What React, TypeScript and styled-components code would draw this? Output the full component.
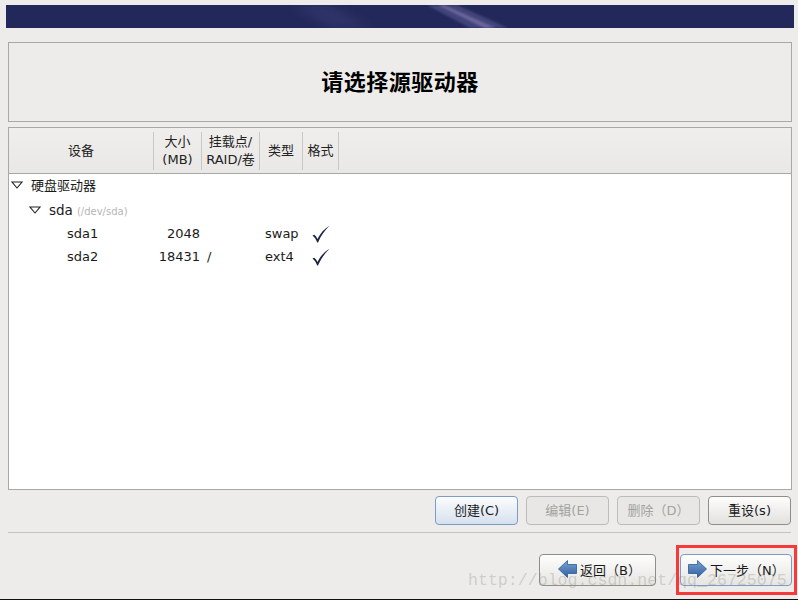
import React from 'react'
import styled, { createGlobalStyle } from 'styled-components'

const GlobalStyle = createGlobalStyle`
    html, body {
        margin: 0;
        padding: 0;
        background: #edecea;
    }
`

const Page = styled.div`
    position: relative;
    width: 798px;
    height: 600px;
    box-sizing: border-box;
    padding-top: 5px;
    display: flex;
    flex-direction: column;
    overflow: hidden;
    background: #edecea;
    color: #1a1a1a;
    font-family: "DejaVu Sans", "Noto Sans CJK SC", sans-serif;
    font-size: 13px;
    border-bottom: 1px solid #111;
`

const Banner = styled.div`
    height: 23px;
    margin: 0 4px 0 6px;
    flex-shrink: 0;
    background: #22295a;
    line-height: 0;
`

const TitleBox = styled.div`
    height: 80px;
    box-sizing: border-box;
    margin: 14px 6px 0 8px;
    padding-bottom: 4px;
    flex-shrink: 0;
    display: flex;
    align-items: center;
    justify-content: center;
    border: 1px solid #a8a8a4;
    font-family: "Noto Sans CJK SC", sans-serif;
    font-size: 22px;
    font-weight: 700;
    color: #000;
    letter-spacing: 0.5px;
`

const TableBox = styled.div`
    height: 363px;
    box-sizing: border-box;
    margin: 5px 6px 0 8px;
    flex-shrink: 0;
    border: 1px solid #a8a8a4;
    background: #fff;
    display: flex;
    flex-direction: column;
`

const HeaderRow = styled.div`
    height: 46px;
    flex-shrink: 0;
    box-sizing: border-box;
    display: grid;
    grid-template-columns: 145px 48px 58px 43px 36px;
    align-items: center;
    background: linear-gradient(#efeeec, #e9e8e6);
    border-bottom: 1px solid #a8a8a4;
`

const HeaderCell = styled.div`
    height: 38px;
    display: flex;
    align-items: center;
    justify-content: center;
    text-align: center;
    line-height: 18px;
    white-space: pre;
    border-right: 1px solid #c9c8c5;
    color: #222;
`

const TreeBody = styled.div`
    display: flex;
    flex-direction: column;
`

const TreeRow = styled.div<{ $indent: number }>`
    height: 24px;
    box-sizing: border-box;
    display: flex;
    align-items: center;
    gap: 8px;
    padding-left: ${p => p.$indent}px;
`

const RootRow = styled(TreeRow)`
    padding-bottom: 3px;
`

const Expander = styled.svg`
    width: 12px;
    height: 8px;
    flex-shrink: 0;
`

const DevicePath = styled.span`
    margin-left: 4px;
    font-size: 10px;
    color: #b5b5b5;
`

const DeviceName = styled.span`
    font-size: 13.5px;
`

const PartitionRow = styled.div`
    height: 23px;
    display: grid;
    grid-template-columns: 145px 46px 56px 47px 40px;
    align-items: center;
`

const NameCell = styled.div`
    padding-left: 58px;
`

const SizeCell = styled.div`
    text-align: right;
`

const MountCell = styled.div`
    padding-left: 7px;
`

const TypeCell = styled.div`
    padding-left: 9px;
    white-space: nowrap;
`

const FormatCell = styled.div`
    display: flex;
    padding-left: 9px;
`

const ActionRow = styled.div`
    height: 29px;
    margin: 6px 7px 0 435px;
    display: flex;
    gap: 8px;
    flex-shrink: 0;
`

const Button = styled.button<{ $focused?: boolean; $off?: boolean }>`
    flex: 1;
    padding: 0 0 2px;
    box-sizing: border-box;
    border-radius: 4px;
    font: inherit;
    display: flex;
    align-items: center;
    justify-content: center;
    white-space: pre;
    border: 1px solid ${p => (p.$focused ? '#7b9cc4' : p.$off ? '#bdbcb9' : '#8f8e8b')};
    color: ${p => (p.$off ? '#a3a3a0' : '#1a1a1a')};
    background: ${p =>
        p.$focused
            ? 'linear-gradient(#fbfcfe, #d6e1ee)'
            : p.$off
              ? '#e8e7e5'
              : 'linear-gradient(#fdfdfc, #e2e1de)'};
`

const Divider = styled.div`
    height: 1px;
    margin: 7px 7px 0 8px;
    flex-shrink: 0;
    background: #c4c3c0;
`

const NavRow = styled.div`
    height: 32px;
    margin: 21px 6px 0 0;
    display: flex;
    justify-content: flex-end;
    gap: 24px;
    flex-shrink: 0;
`

const NavButton = styled(Button)`
    flex: none;
    width: ${p => (p.$focused ? 112 : 117)}px;
    gap: 3px;
    justify-content: flex-start;
    padding: 0 0 2px ${p => (p.$focused ? 7 : 18)}px;
    background: linear-gradient(#fdfdfc, #e6e5e2);
`

const Watermark = styled.div`
    position: absolute;
    left: 468px;
    top: 571px;
    font-family: "Liberation Mono", monospace;
    font-size: 16.6px;
    color: rgba(130, 130, 120, 0.3);
    white-space: nowrap;
`

const Highlight = styled.div`
    position: absolute;
    left: 676px;
    top: 545px;
    width: 121px;
    height: 50px;
    box-sizing: border-box;
    border: 3px solid #f63a3a;
`

const BannerArt = () => (
    <svg width="788" height="23" viewBox="0 0 788 23">
        <defs>
            <filter id="soft" x="-20%" y="-20%" width="140%" height="140%">
                <feGaussianBlur stdDeviation="1" />
            </filter>
            <filter id="wide" x="-50%" y="-20%" width="200%" height="140%">
                <feGaussianBlur stdDeviation="5" />
            </filter>
        </defs>
        <rect width="788" height="23" fill="#22295a" />
        <polygon points="285,0 325,0 365,23 325,23" fill="#343b6e" opacity="0.6" filter="url(#wide)" />
        <polygon points="421,0 451,0 502,23 464,23" fill="#4f5088" filter="url(#soft)" opacity="0.7" />
        <polygon points="432,0 438,0 490,23 478,23" fill="#8078aa" filter="url(#soft)" opacity="0.65" />
    </svg>
)

const TreeArrow = () => (
    <Expander viewBox="0 0 12 8">
        <path d="M1 1 H11 L6 7 Z" fill="#fff" stroke="#222" strokeWidth="1.1" />
    </Expander>
)

const Check = () => (
    <svg width="18" height="18" viewBox="0 0 18 18">
        <path d="M0.5 10.5 L2.3 9.8 C3.6 10.8 4.6 12.2 5.5 14 C8 8.8 12 4 17.5 0.8 C12.5 5.5 8.8 11 6 17.5 H5.2 C4.2 14.5 2.6 12.2 0.5 10.5 Z" fill="#1c2540" />
    </svg>
)

const NavArrow = ({ flip }: { flip?: boolean }) => (
    <svg width="19" height="18" viewBox="0 0 19 18" style={{ transform: flip ? 'scaleX(-1)' : undefined }}>
        <defs>
            <linearGradient id="navBlue" x1="0" y1="0" x2="0" y2="1">
                <stop offset="0" stopColor="#7ba3d2" />
                <stop offset="1" stopColor="#2f5f9e" />
            </linearGradient>
        </defs>
        <path d="M0.5 4.5 H9.5 V0.5 L18.5 9 L9.5 17.5 V13.5 H0.5 Z" fill="url(#navBlue)" stroke="#2c5a94" strokeWidth="0.8" />
    </svg>
)

const columns = ['设备', '大小\n(MB)', '挂载点/\nRAID/卷', '类型', '格式']

const partitions = [
    { name: 'sda1', size: '2048', mount: '', type: 'swap' },
    { name: 'sda2', size: '18431', mount: '/', type: 'ext4' },
]

export default function App() {
    return (
        <Page>
            <GlobalStyle />
            <Banner>
                <BannerArt />
            </Banner>
            <TitleBox>请选择源驱动器</TitleBox>
            <TableBox>
                <HeaderRow>
                    {columns.map(c => (
                        <HeaderCell key={c}>{c}</HeaderCell>
                    ))}
                </HeaderRow>
                <TreeBody>
                    <RootRow $indent={2}>
                        <TreeArrow />
                        <span>硬盘驱动器</span>
                    </RootRow>
                    <TreeRow $indent={20}>
                        <TreeArrow />
                        <span>
                            <DeviceName>sda</DeviceName>
                            <DevicePath>(/dev/sda)</DevicePath>
                        </span>
                    </TreeRow>
                    {partitions.map(p => (
                        <PartitionRow key={p.name}>
                            <NameCell>{p.name}</NameCell>
                            <SizeCell>{p.size}</SizeCell>
                            <MountCell>{p.mount}</MountCell>
                            <TypeCell>{p.type}</TypeCell>
                            <FormatCell>
                                <Check />
                            </FormatCell>
                        </PartitionRow>
                    ))}
                </TreeBody>
            </TableBox>
            <ActionRow>
                <Button $focused>创建(C)</Button>
                <Button $off>编辑(E)</Button>
                <Button $off>删除（D）</Button>
                <Button>重设(s)</Button>
            </ActionRow>
            <Divider />
            <NavRow>
                <NavButton>
                    <NavArrow flip />
                    返回（B）
                </NavButton>
                <NavButton $focused>
                    <NavArrow />
                    下一步（N）
                </NavButton>
            </NavRow>
            <Watermark>http://blog.csdn.net/qq_26725075</Watermark>
            <Highlight />
        </Page>
    )
}
